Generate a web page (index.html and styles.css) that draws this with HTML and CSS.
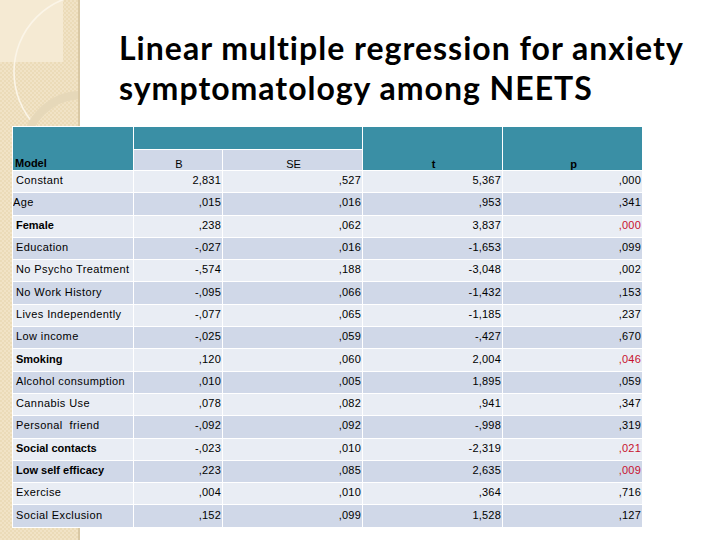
FILE: index.html
```html
<!DOCTYPE html>
<html>
<head>
<meta charset="utf-8">
<link rel="stylesheet" href="styles.css">
</head>
<body>
<div class="slide">
  <div class="deco">
    <svg width="80" height="540" viewBox="0 0 80 540">
      <rect x="0" y="0" width="63" height="62" fill="#f5ead3"/>
      <circle cx="92" cy="72" r="78" fill="none" stroke="#fbf5e8" stroke-width="1.6"/>
      <circle cx="82" cy="152" r="57" fill="none" stroke="#e6d8b9" stroke-width="8"/>
    </svg>
  </div>
  <h1 class="title">Linear multiple regression for anxiety<br>symptomatology among NEETS</h1>
  <table class="reg">
    <colgroup>
      <col class="c-label"><col class="c-b"><col class="c-num"><col class="c-num"><col class="c-num">
    </colgroup>
    <thead>
      <tr class="h1">
        <th class="teal model" rowspan="2">Model</th>
        <th class="teal" colspan="2"></th>
        <th class="teal bold" rowspan="2">t</th>
        <th class="teal bold" rowspan="2">p</th>
      </tr>
      <tr class="h2">
        <th class="sub">B</th>
        <th class="sub">SE</th>
      </tr>
    </thead>
    <tbody>
      <tr><td>Constant</td><td>2,831</td><td>,527</td><td>5,367</td><td>,000</td></tr>
      <tr><td class="flush">Age</td><td>,015</td><td>,016</td><td>,953</td><td>,341</td></tr>
      <tr><td class="b">Female</td><td>,238</td><td>,062</td><td>3,837</td><td class="red">,000</td></tr>
      <tr><td>Education</td><td>-,027</td><td>,016</td><td>-1,653</td><td>,099</td></tr>
      <tr><td>No Psycho Treatment</td><td>-,574</td><td>,188</td><td>-3,048</td><td>,002</td></tr>
      <tr><td>No Work History</td><td>-,095</td><td>,066</td><td>-1,432</td><td>,153</td></tr>
      <tr><td>Lives Independently</td><td>-,077</td><td>,065</td><td>-1,185</td><td>,237</td></tr>
      <tr><td>Low income</td><td>-,025</td><td>,059</td><td>-,427</td><td>,670</td></tr>
      <tr><td class="b">Smoking</td><td>,120</td><td>,060</td><td>2,004</td><td class="red">,046</td></tr>
      <tr><td>Alcohol consumption</td><td>,010</td><td>,005</td><td>1,895</td><td>,059</td></tr>
      <tr><td>Cannabis Use</td><td>,078</td><td>,082</td><td>,941</td><td>,347</td></tr>
      <tr><td>Personal&nbsp; friend</td><td>-,092</td><td>,092</td><td>-,998</td><td>,319</td></tr>
      <tr><td class="b">Social contacts</td><td>-,023</td><td>,010</td><td>-2,319</td><td class="red">,021</td></tr>
      <tr><td class="b">Low self efficacy</td><td>,223</td><td>,085</td><td>2,635</td><td class="red">,009</td></tr>
      <tr><td>Exercise</td><td>,004</td><td>,010</td><td>,364</td><td>,716</td></tr>
      <tr><td>Social Exclusion</td><td>,152</td><td>,099</td><td>1,528</td><td>,127</td></tr>
    </tbody>
  </table>
</div>
</body>
</html>
```
FILE: styles.css
```css
html, body {
  margin: 0;
  padding: 0;
  background: #ffffff;
}

.slide {
  position: relative;
  width: 720px;
  height: 540px;
  overflow: hidden;
  padding-top: 28px;
  box-sizing: border-box;
}

.deco {
  position: absolute;
  left: 0;
  top: 0;
  width: 78px;
  height: 540px;
  border-right: 2px solid #d9c8a4;
  background-color: #eedfc0;
  background-image: repeating-conic-gradient(#f1e3c6 0 25%, #ebdbb8 0 50%);
  background-size: 4px 4px;
  overflow: hidden;
  z-index: 0;
}

.deco svg {
  display: block;
}

.title {
  position: relative;
  z-index: 1;
  margin: 0 0 18px 119px;
  font-family: Lato, "Liberation Sans", sans-serif;
  font-weight: 700;
  font-size: 32px;
  line-height: 40px;
  letter-spacing: 1px;
  color: #000000;
}

.reg {
  position: relative;
  z-index: 1;
  margin-left: 12px;
  width: 630px;
  table-layout: fixed;
  border-collapse: collapse;
  font-family: "Liberation Sans", Arial, sans-serif;
  font-size: 11px;
  color: #000000;
}

.c-label { width: 121px; }
.c-b { width: 89px; }
.c-num { width: 140px; }

.reg th,
.reg td {
  border: 1px solid #ffffff;
  padding: 0 1px 0 3px;
  white-space: nowrap;
  overflow: hidden;
}

.reg thead th {
  font-weight: 400;
  text-align: center;
  vertical-align: bottom;
}

.h1 { height: 23px; }
.h2 { height: 21px; }

.teal {
  background: #3a8fa5;
}

.teal.model {
  text-align: left;
  font-weight: 700;
  padding-left: 2px;
  padding-bottom: 1px;
}

.teal.bold {
  font-weight: 700;
  padding-bottom: 0;
}

.sub {
  background: #d0d8e8;
  padding-bottom: 2px;
}

.reg tbody tr {
  height: 22.3px;
}

.reg tbody tr:nth-child(odd) td {
  background: #e9edf4;
}

.reg tbody tr:nth-child(even) td {
  background: #d0d8e8;
}

.reg tbody td {
  text-align: right;
  vertical-align: middle;
  padding-bottom: 3px;
  letter-spacing: 0.2px;
}

.reg tbody td:first-child {
  text-align: left;
  letter-spacing: 0.4px;
}

.reg tbody td.flush {
  padding-left: 0;
}

.reg tbody td.b {
  font-weight: 700;
  letter-spacing: 0;
}

.reg tbody td.red {
  color: #c8102e;
}
```
